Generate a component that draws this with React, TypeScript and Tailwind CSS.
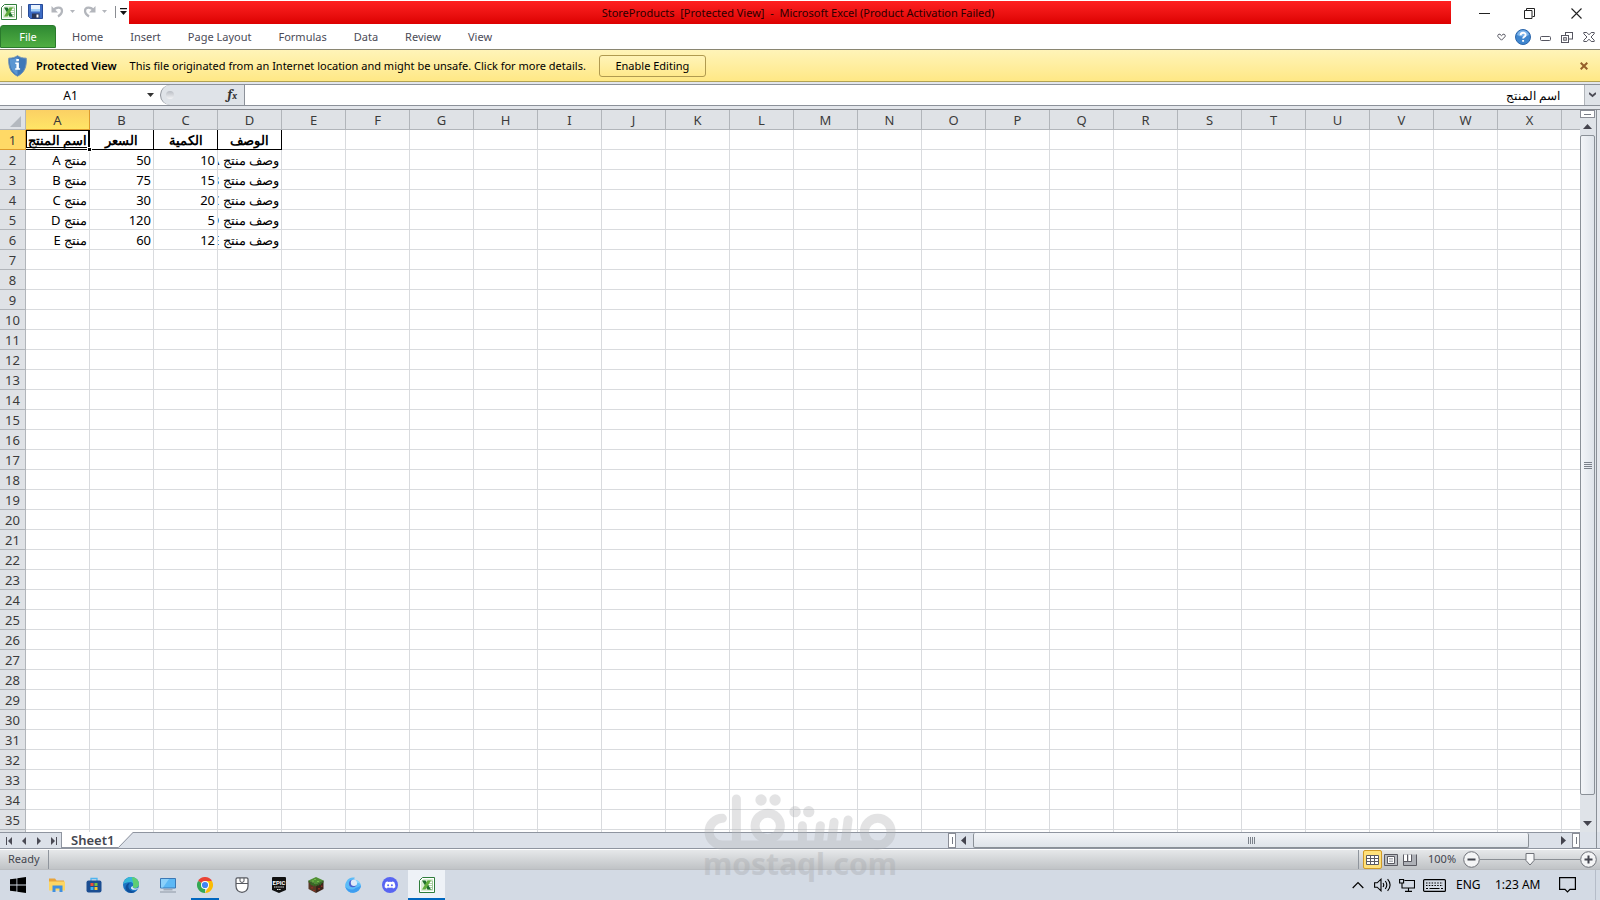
import type { ReactNode } from "react";

const tabs = ["Home", "Insert", "Page Layout", "Formulas", "Data", "Review", "View"];
const columns = "ABCDEFGHIJKLMNOPQRSTUVWX".split("");
const rowNumbers = Array.from({ length: 36 }, (_, i) => i + 1);

const sheet: string[][] = [
  ["اسم المنتج", "السعر", "الكمية", "الوصف"],
  ["منتج A", "50", "10", "وصف منتج A"],
  ["منتج B", "75", "15", "وصف منتج B"],
  ["منتج C", "30", "20", "وصف منتج C"],
  ["منتج D", "120", "5", "وصف منتج D"],
  ["منتج E", "60", "12", "وصف منتج E"],
];

function ExcelIcon() {
  return (
    <svg width="16" height="16" viewBox="0 0 16 16">
      <path d="M3.5.5h12v15H.5v-12z" fill="#fff" stroke="#2f7d3b" />
      <path d="M2 4.5 4.5 2H14v12H2z" fill="#d9edd3" />
      <path d="M8.500 4h5v8.500h-5z" fill="#fff" stroke="#8cc084" strokeWidth=".8" />
      <path d="M9 6.500h4M9 8.500h4M9 10.500h4" stroke="#8cc084" strokeWidth=".7" />
      <path d="M3 3.500h3.500L12 12.500H8.500z" fill="#1e6f2c" />
      <path d="M8.500 3.500H12L6.500 12.500H3z" fill="#62ad3c" />
    </svg>
  );
}

function SaveIcon() {
  return (
    <svg width="15" height="15" viewBox="0 0 15 15">
      <path d="M.5.5h14v14h-12l-2-2z" fill="#3d6cc4" stroke="#274b99" />
      <path d="M3 1h9v6H3z" fill="#eaf3fd" />
      <path d="M3 5h9v2.500H3z" fill="#a5d0f5" />
      <path d="M4 9.500h7.500v5H4z" fill="#2b3656" />
      <path d="M8.500 10.500h2v3h-2z" fill="#fff" />
    </svg>
  );
}

function UndoIcon({ flip = false }: { flip?: boolean }) {
  return (
    <svg width="13" height="13" viewBox="0 0 13 13" className={flip ? "-scale-x-100" : ""}>
      <path d="M2 5.500C5 1.500 11 1.500 11 6c0 2.500-1.500 4-4 5.500" fill="none" stroke="#b3b6bc" strokeWidth="2.200" />
      <path d="M.5 1v6.500H7z" fill="#b3b6bc" />
    </svg>
  );
}

function DownArrow({ color = "#4b4b55" }: { color?: string }) {
  return (
    <svg width="7" height="4" viewBox="0 0 7 4">
      <path d="M0 0h7L3.500 4z" fill={color} />
    </svg>
  );
}

function TitleBar() {
  return (
    <header className="flex h-[25px] shrink-0 items-start bg-white">
      <div className="flex h-[23px] w-[129px] shrink-0 items-center pl-px">
        <ExcelIcon />
        <span className="ml-1 h-3 w-px bg-[#8a8d92]" />
        <button aria-label="Save" className="ml-[6px]"><SaveIcon /></button>
        <button aria-label="Undo" className="ml-2"><UndoIcon /></button>
        <button aria-label="Undo history" className="ml-[6px]">
          <svg width="5" height="3" viewBox="0 0 5 3"><path d="M0 0h5L2.500 3z" fill="#b3b6bc" /></svg>
        </button>
        <button aria-label="Redo" className="ml-2"><UndoIcon flip /></button>
        <button aria-label="Redo history" className="ml-[6px]">
          <svg width="5" height="3" viewBox="0 0 5 3"><path d="M0 0h5L2.500 3z" fill="#b3b6bc" /></svg>
        </button>
        <span className="ml-2 h-3 w-px bg-[#8a8d92]" />
        <button aria-label="Customize toolbar" className="ml-1">
          <svg width="7" height="7" viewBox="0 0 7 7"><path d="M0 0h7v1.300H0zM0 3h7L3.500 7z" fill="#111" /></svg>
        </button>
      </div>
      <div className="mt-px h-[23px] flex-1 bg-linear-to-b from-[#ff2020] to-[#dc0000] pl-4 text-center text-[11px] leading-[23px] whitespace-pre text-[#2c0000]">
        {"StoreProducts  [Protected View]  -  Microsoft Excel (Product Activation Failed)"}
      </div>
      <div className="ml-[11px] flex h-[27px] shrink-0 items-center">
        <button aria-label="Minimize" className="flex w-[45px] justify-center">
          <svg width="11" height="11" viewBox="0 0 11 11"><path d="M0 5.500h11" stroke="#222" /></svg>
        </button>
        <button aria-label="Restore" className="flex w-[45px] justify-center">
          <svg width="11" height="11" viewBox="0 0 11 11" fill="none" stroke="#222"><path d="M.5 2.500h7.500v8H.5zM2.500 2.500v-2h8v8h-2" /></svg>
        </button>
        <button aria-label="Close" className="flex w-12 justify-center">
          <svg width="11" height="11" viewBox="0 0 11 11" stroke="#222" strokeWidth="1.100"><path d="M.5.5l10 10M10.500.5l-10 10" /></svg>
        </button>
      </div>
    </header>
  );
}

function Ribbon() {
  return (
    <nav className="flex h-6 shrink-0 items-center bg-white text-[11px] text-[#4b4b57]">
      <button className="h-[23px] w-14 self-start rounded-t-[3px] border border-[#2a7a2c] bg-linear-to-b from-[#2f8a33] to-[#4fae42] pt-px text-white">File</button>
      <div className="ml-4 flex gap-[27px]">
        {tabs.map((t) => (
          <button key={t}>{t}</button>
        ))}
      </div>
      <div className="ml-auto flex items-center pr-[5px]">
        <button aria-label="Expand ribbon">
          <svg width="9" height="8" viewBox="0 0 9 8"><path d="M4.500 7.200 1 3.700C.2 2.300 1.600.5 3 1.300l1.500 1.400L6 1.300c1.400-.8 2.800 1 2 2.400z" fill="#fff" stroke="#555560" /></svg>
        </button>
        <button aria-label="Help" className="ml-[9px]">
          <svg width="16" height="16" viewBox="0 0 16 16">
            <circle cx="8" cy="8" r="7.500" fill="#3f86cf" stroke="#2c66ab" />
            <path d="M2 6a6.200 6.200 0 0 1 12 0q-6 3-12 0" fill="#7db4ea" />
            <path d="M5.600 6.200c0-3.200 5-3.200 5-.3 0 1.900-2.500 1.900-2.500 3.700M8.100 11v1.700" fill="none" stroke="#fff" strokeWidth="1.900" />
          </svg>
        </button>
        <button aria-label="Minimize workbook" className="ml-[9px]">
          <svg width="11" height="11" viewBox="0 0 11 11"><rect x=".5" y="4.500" width="10" height="4" rx="1" fill="#fff" stroke="#555560" /></svg>
        </button>
        <button aria-label="Restore workbook" className="ml-[10px]">
          <svg width="12" height="11" viewBox="0 0 12 11" fill="#fff" stroke="#555560"><rect x="4.500" y=".5" width="7" height="6.500" /><rect x=".5" y="3.500" width="7" height="7" /><rect x="2.700" y="5.700" width="2.600" height="2.500" /></svg>
        </button>
        <button aria-label="Close workbook" className="ml-[10px]">
          <svg width="12" height="10" viewBox="0 0 12 10" fill="#fff" stroke="#555560"><path d="M.8.5h3L6 2.800 8.200.5h3v1.300L8 5l3.200 3.200v1.300h-3L6 7.200 3.800 9.500h-3V8.200L4 5 .8 1.800z" /></svg>
        </button>
      </div>
    </nav>
  );
}

function ProtectedViewBar() {
  return (
    <section className="flex h-[33px] shrink-0 items-center border-y border-[#b3a352] border-t-[#8a8672] bg-linear-to-b from-[#fff4b8] to-[#ffe885] pt-px pl-2 text-[11px] text-black">
      <svg width="19" height="22" viewBox="0 0 19 22">
        <path d="M9.500.7C12 2.500 15 3.300 18.200 3.200c.6 8-1.500 14.500-8.700 18C2.300 17.700.2 11.200.8 3.200 4 3.300 7 2.500 9.500.7z" fill="#3f78b8" stroke="#6d8fb5" />
        <path d="M9.500 2v18C4 17 1.700 12 1.900 4.300 5 4.300 7.500 3.500 9.500 2z" fill="#5c96d2" />
        <path d="M8.300 4h2.600v2.200H8.300zM7.300 7.500h3.600v5.700h1.200v1.500H7.200v-1.500h1.200V9H7.300z" fill="#fff" />
      </svg>
      <strong className="ml-[9px] pt-px font-semibold">Protected View</strong>
      <span className="ml-[13px] pt-px">This file originated from an Internet location and might be unsafe. Click for more details.</span>
      <button className="ml-[13px] h-[22px] w-[107px] rounded-[3px] border border-[#b09a50] bg-linear-to-b from-[#fff4b8] to-[#ffe98c]">Enable Editing</button>
      <button aria-label="Close message" className="mr-3 ml-auto">
        <svg width="8" height="8" viewBox="0 0 8 8" stroke="#96602a" strokeWidth="2"><path d="M.7.7l6.600 6.600M7.300.7.7 7.300" /></svg>
      </button>
    </section>
  );
}

function FormulaBar() {
  return (
    <div className="shrink-0 bg-[#e3e6eb] pt-[2px] pb-[3px]">
      <div className="flex h-[22px] border-y border-[#8c9199] bg-white">
        <input aria-label="Name box" readOnly value="A1" className="w-[141px] shrink-0 pt-px text-center text-[12px] outline-none" />
        <button aria-label="Name list" className="flex w-[19px] shrink-0 items-center justify-center"><DownArrow color="#333" /></button>
        <div className="flex w-[85px] shrink-0 items-center rounded-l-full border-r border-l border-[#8c9199] bg-[#dfe3e8] pl-[5px]">
          <span className="h-2 w-2 rounded-full bg-linear-to-b from-[#b9bdc4] to-[#f3f4f6]" />
          <button aria-label="Insert function" className="mr-[7px] ml-auto pb-px font-serif text-[14px] leading-none font-bold text-[#333] italic">f<span className="text-[10px]">x</span></button>
        </div>
        <input aria-label="Formula" dir="rtl" readOnly value="اسم المنتج" className="min-w-0 flex-1 pt-px pr-6 text-[12px] text-black outline-none" />
        <button aria-label="Expand formula bar" className="flex w-4 shrink-0 items-center justify-center border-l border-[#b1b5ba] bg-[#dfe3e8]">
          <svg width="7" height="6" viewBox="0 0 7 6"><path d="M0 1l3.500 3L7 1" fill="none" stroke="#4b4b55" strokeWidth="1.800" /></svg>
        </button>
      </div>
    </div>
  );
}

function Cell({ row, col }: { row: number; col: number }) {
  const text = sheet[row - 1]?.[col];
  if (text === undefined) return <td className="h-5 border-r border-b border-[#d9dbde] p-0" />;
  if (row === 1) {
    return (
      <td className="relative h-5 border-r border-b border-black p-0">
        <div dir="rtl" className="overflow-hidden pt-px text-center leading-[18px] font-bold whitespace-nowrap">{text}</div>
        {col === 0 && (
          <>
            <span className="absolute inset-x-0 top-0 bottom-px border border-black" />
            <span className="absolute -right-[3px] -bottom-[3px] z-10 h-[5px] w-[5px] border border-white bg-black" />
          </>
        )}
      </td>
    );
  }
  return (
    <td className={col === 3 ? "h-5 border-r border-b border-[#d9dbde] p-0" : "h-5 border-r border-b border-[#d9dbde] p-0 pr-[2px]"}>
      <div
        dir={col === 0 || col === 3 ? "rtl" : "ltr"}
        className={col === 3 ? "w-full overflow-hidden pt-[2px] pr-[2px] text-right leading-[17px] whitespace-nowrap" : "w-full overflow-hidden pt-[2px] text-right leading-[17px] whitespace-nowrap"}
      >
        {text}
      </div>
    </td>
  );
}

function Grid() {
  return (
    <div className="min-w-0 flex-1 overflow-hidden bg-white">
      <table className="w-full table-fixed border-separate border-spacing-0 text-[13px] text-black">
        <colgroup>
          <col className="w-[26px]" />
          {columns.map((c) => (
            <col key={c} className="w-16" />
          ))}
          <col />
        </colgroup>
        <thead>
          <tr>
            <th aria-label="Select all" className="h-5 border-r border-b border-[#b1b5ba] bg-[#dfe2e6] p-0">
              <svg width="11" height="11" viewBox="0 0 11 11" className="mt-[3px] ml-auto mr-1"><path d="M11 0v11H0z" fill="#b4b9bf" /></svg>
            </th>
            {columns.map((c, i) => (
              <th
                key={c}
                className={
                  i === 0
                    ? "h-5 border-r border-b border-[#dc9a2c] bg-linear-to-b from-[#fbd064] to-[#ffe566] p-0 pt-[2px] leading-[17px] font-normal text-[#3b3b3b]"
                    : "h-5 border-r border-b border-[#b1b5ba] bg-[#dfe2e6] p-0 pt-[2px] leading-[17px] font-normal text-[#3b3b3b]"
                }
              >
                {c}
              </th>
            ))}
            <th aria-label="Y" className="h-5 border-b border-[#b1b5ba] bg-[#dfe2e6] p-0" />
          </tr>
        </thead>
        <tbody>
          {rowNumbers.map((r) => (
            <tr key={r}>
              <th
                className={
                  r === 1
                    ? "h-5 border-r border-b border-[#dc9a2c] bg-[#ffd966] p-0 pt-[2px] leading-[17px] font-normal text-[#3b3b3b]"
                    : "h-5 border-r border-b border-[#b1b5ba] bg-[#dfe2e6] p-0 pt-[2px] leading-[17px] font-normal text-[#3b3b3b]"
                }
              >
                {r}
              </th>
              {columns.map((c, i) => (
                <Cell key={c} row={r} col={i} />
              ))}
              <td className="h-5 border-b border-[#d9dbde] p-0" />
            </tr>
          ))}
        </tbody>
      </table>
    </div>
  );
}

function VerticalScroll() {
  return (
    <div className="flex w-5 shrink-0 bg-[#e4e7ec]">
      <div className="flex w-[17px] flex-col border-r border-[#8a9097] bg-[#dfe3e8]">
        <div className="flex h-2 w-[15px] shrink-0 items-center justify-center border border-[#8a8d96] bg-white">
          <span className="h-px w-[7px] bg-[#777b85]" />
        </div>
        <button aria-label="Scroll up" className="flex h-[17px] w-[15px] shrink-0 items-center justify-center">
          <svg width="9" height="5" viewBox="0 0 9 5"><path d="M4.500 0 9 5H0z" fill="#44444e" /></svg>
        </button>
        <div className="flex w-[15px] flex-1 flex-col items-center justify-center gap-px rounded-[2px] border border-[#8a9097] bg-linear-to-r from-[#f3f5f8] to-[#dfe4ea]">
          {[0, 1, 2, 3].map((i) => (
            <span key={i} className="h-px w-2 bg-[#7b818a]" />
          ))}
        </div>
        <div className="h-[19px] shrink-0" />
        <button aria-label="Scroll down" className="flex h-[18px] w-[15px] shrink-0 items-center justify-center">
          <svg width="9" height="5" viewBox="0 0 9 5"><path d="M0 0h9L4.500 5z" fill="#44444e" /></svg>
        </button>
      </div>
    </div>
  );
}

function SplitHandle() {
  return (
    <span className="flex w-2 shrink-0 items-center justify-center border border-[#8a8d96] bg-white">
      <span className="h-[7px] w-px bg-[#777b85]" />
    </span>
  );
}

const navIcons: [string, string][] = [
  ["First sheet", "M1 0h1v8H1zM7 0v8L3 4z"],
  ["Previous sheet", "M6 0v8L2 4z"],
  ["Next sheet", "M2 0v8l4-4z"],
  ["Last sheet", "M1 0v8l4-4zM6 0h1v8H6z"],
];

function SheetBar() {
  return (
    <div className="flex h-[17px] shrink-0 border-b border-[#8f95a0] bg-[#dce1e9]">
      <div className="flex min-w-0 flex-1 border-t border-[#8f95a0]">
        <div className="flex w-[62px] shrink-0 items-center gap-[6px] border-r border-[#8f95a0] pl-[5px]">
          {navIcons.map(([label, d]) => (
            <button key={label} aria-label={label}>
              <svg width="9" height="8" viewBox="0 0 9 8"><path d={d} fill="#4b4b55" /></svg>
            </button>
          ))}
        </div>
        <div className="relative -mt-px flex h-4 w-[71px] shrink-0">
          <svg className="absolute inset-0" width="71" height="16" viewBox="0 0 71 16">
            <path d="M0 0h71L56 15.500H0z" fill="#fff" />
            <path d="M71 .5 56.500 15.500H0" fill="none" stroke="#8f95a0" />
          </svg>
          <button className="relative pl-[9px] text-[13px] leading-4 font-semibold text-[#44464f]">Sheet1</button>
        </div>
        <div className="flex-1" />
        <SplitHandle />
        <button aria-label="Scroll left" className="flex w-3 shrink-0 items-center justify-end">
          <svg width="5" height="9" viewBox="0 0 5 9" className="mr-[2px]"><path d="M5 0v9L0 4.500z" fill="#44444e" /></svg>
        </button>
        <div className="ml-[5px] flex w-[calc(35%+3px)] shrink-0 items-center justify-center gap-px rounded-[2px] border border-t-0 border-[#8a9097] bg-linear-to-b from-[#f3f5f8] to-[#dfe4ea]">
          {[0, 1, 2, 3].map((i) => (
            <span key={i} className="h-[7px] w-px bg-[#7b818a]" />
          ))}
        </div>
        <button aria-label="Scroll right" className="flex w-[37px] shrink-0 items-center justify-end">
          <svg width="5" height="9" viewBox="0 0 5 9"><path d="M0 0v9l5-4.500z" fill="#44444e" /></svg>
        </button>
        <span className="w-[6px] shrink-0" />
        <SplitHandle />
      </div>
      <div className="w-5 shrink-0">
        <div className="h-full w-[17px] border-r border-[#8a9097]" />
      </div>
    </div>
  );
}

function StatusBar() {
  return (
    <div className="flex h-[21px] shrink-0 items-center border-t border-b border-t-white border-b-[#b9bcc0] bg-linear-to-b from-[#e6e8ea] to-[#c0c3c6] text-[11px] text-[#44464f]">
      <span className="w-12 shrink-0 pl-2">Ready</span>
      <span className="h-full w-px bg-[#8f959d]" />
      <span className="ml-auto h-full w-px bg-[#8f959d]" />
      <button aria-label="Normal view" className="ml-1 flex h-[19px] w-[19px] items-center justify-center rounded-[2px] border border-[#d09a28] bg-[#ffe17a]">
        <svg width="13" height="10" viewBox="0 0 13 10" fill="#fff" stroke="#5a5a62"><path d="M.5.5h12v9H.5zM.5 3.500h12M.5 6.500h12M4.500.5v9M8.500.5v9" /></svg>
      </button>
      <button aria-label="Page layout view" className="ml-[2px]">
        <svg width="14" height="12" viewBox="0 0 14 12"><path d="M.5.5h13v11H.5z" fill="#b9bcc1" stroke="#5a5a62" /><path d="M3.500 2.500h7v7h-7z" fill="#fff" stroke="#5a5a62" /><path d="M5 4.500h4M5 6h4M5 7.500h4" stroke="#8a8d96" strokeWidth=".7" /></svg>
      </button>
      <button aria-label="Page break preview" className="ml-[5px]">
        <svg width="14" height="12" viewBox="0 0 14 12"><path d="M.5.5h13v11H.5z" fill="#aeb1b7" /><path d="M1 1h3v6H1zM5.500 1h3v6h-3z" fill="#fff" /><path d="M.5.5v11h13V.5M4.500.5v7M8.500.5v7H.5" fill="none" stroke="#5a5a62" /></svg>
      </button>
      <span className="ml-[11px] w-7">100%</span>
      <button aria-label="Zoom out" className="ml-[7px]">
        <svg width="17" height="17" viewBox="0 0 17 17"><circle cx="8.500" cy="8.500" r="7.800" fill="#f4f5f6" stroke="#6f7279" /><path d="M4.500 8.500h8" stroke="#44464f" strokeWidth="2" /></svg>
      </button>
      <div className="relative h-[17px] w-[100px]">
        <svg width="100" height="17" viewBox="0 0 100 17">
          <path d="M0 8.500h100" stroke="#8b8f95" />
          <path d="M46 2.500h8v7l-4 4.500-4-4.500z" fill="#f7f8f9" stroke="#6f7279" />
        </svg>
        <input type="range" aria-label="Zoom" min={10} max={190} defaultValue={100} className="absolute inset-0 w-full opacity-0" />
      </div>
      <button aria-label="Zoom in" className="mr-[3px]">
        <svg width="17" height="17" viewBox="0 0 17 17"><circle cx="8.500" cy="8.500" r="7.800" fill="#f4f5f6" stroke="#6f7279" /><path d="M4.500 8.500h8M8.500 4.500v8" stroke="#44464f" strokeWidth="2" /></svg>
      </button>
    </div>
  );
}

const apps: { name: string; open?: boolean; active?: boolean; icon: ReactNode }[] = [
  {
    name: "File Explorer",
    icon: (
      <svg width="16" height="16" viewBox="0 0 16 16">
        <path d="M0 1.500h6l1.500 2H15v3H0z" fill="#e8a33a" />
        <path d="M0 4.500h16v9H0z" fill="#fdd663" />
        <path d="M3.500 8.500h10V15h-3v-3.500h-4V15h-3z" fill="#3f8fe0" />
      </svg>
    ),
  },
  {
    name: "Microsoft Store",
    icon: (
      <svg width="16" height="16" viewBox="0 0 16 16">
        <path d="M5 4V1.500h6V4" fill="none" stroke="#4db4f0" strokeWidth="1.300" />
        <rect x=".5" y="3.500" width="15" height="12" rx="2" fill="#1b4d91" />
        <path d="M4.500 6H7.500v3h-3z" fill="#f04e37" /><path d="M8.500 6h3v3h-3z" fill="#7ac143" />
        <path d="M4.500 10h3v3h-3z" fill="#3fb4f0" /><path d="M8.500 10h3v3h-3z" fill="#fdc82f" />
      </svg>
    ),
  },
  {
    name: "Edge",
    icon: (
      <svg width="16" height="16" viewBox="0 0 16 16">
        <circle cx="8" cy="8" r="8" fill="#1b74c4" />
        <path d="M.3 7C1 2.500 4.500 0 8 0c4.500 0 8 3.200 8 7 0 2.500-2 4-4 4-1.800 0-2.800-.8-2-2 1-2-.5-4-3-4S1.500 6 .3 7z" fill="#35b8d8" />
        <path d="M9 0c4 .3 7 3.300 7 7 0 2.500-2 4-4 4-1.800 0-2.800-.8-2-2C11 6 9 3 9 0z" fill="#5fce73" />
        <path d="M5.500 8.500c-.8 3.500 3 6.500 7.500 5.500C9.500 17.500 3 16 2.500 11 2.500 8 4.500 6 6.500 6c0 1-.8 1.500-1 2.500z" fill="#0e4f9a" />
        <path d="M10 9c-1 1.200.2 2.500 2 2.500 1.500 0 3-.5 3.700-1.500-1 3-5 3.600-7.200 2C7.500 11 8 9.500 10 9z" fill="#e8eef6" />
      </svg>
    ),
  },
  {
    name: "This PC",
    icon: (
      <svg width="16" height="16" viewBox="0 0 16 16">
        <path d="M.5 1.500h15v9.500H.5z" fill="#5cb8f5" stroke="#3b78b5" />
        <path d="M1 2h8L3 10.500H1z" fill="#8bd0fa" />
        <path d="M3.500 12.800h9M0 15h16" stroke="#8e98a5" strokeWidth="1" />
      </svg>
    ),
  },
  {
    name: "Chrome",
    open: true,
    icon: (
      <svg width="16" height="16" viewBox="0 0 16 16">
        <path d="M8 8 1.070 4A8 8 0 0 1 14.930 4z" fill="#ea4335" />
        <path d="M8 8v8A8 8 0 0 1 1.070 4z" fill="#34a853" />
        <path d="M8 4h6.930A8 8 0 0 1 8 16l3.460-6z" fill="#fbbc05" />
        <circle cx="8" cy="8" r="4" fill="#fff" /><circle cx="8" cy="8" r="3.100" fill="#4285f4" />
      </svg>
    ),
  },
  {
    name: "Mouse settings",
    icon: (
      <svg width="14" height="16" viewBox="0 0 14 16">
        <path d="M2.500.8h9a1.500 1.500 0 0 1 1.500 1.500V9c0 4-2.500 6.300-6 6.300S1 13 1 9V2.300A1.500 1.500 0 0 1 2.500.8z" fill="#fff" stroke="#55585f" strokeWidth="1.200" />
        <path d="M1 6.500h12M5 1v3.500q2 2 4 0V1" fill="none" stroke="#55585f" />
      </svg>
    ),
  },
  {
    name: "Epic Games",
    icon: (
      <svg width="14" height="16" viewBox="0 0 14 16">
        <path d="M1 0h12a1 1 0 0 1 1 1v12l-7 3-7-3V1a1 1 0 0 1 1-1z" fill="#111" />
        <text x="7" y="7.500" fill="#fff" fontSize="6" fontWeight="700" textAnchor="middle" fontFamily="Roboto">EPIC</text>
        <path d="M2 10h10M5 12.500h4" stroke="#fff" strokeWidth=".9" strokeDasharray="1.500 .6" />
      </svg>
    ),
  },
  {
    name: "Minecraft",
    icon: (
      <svg width="16" height="16" viewBox="0 0 16 16">
        <path d="M8 0 15.500 3.500 8 7.500.5 3.500z" fill="#4f8f34" />
        <path d="M.5 3.500 8 7.500V16L.5 12z" fill="#5a3826" /><path d="M15.500 3.500 8 7.500V16l7.500-4z" fill="#3c231a" />
        <path d="M.5 3.500 8 7.500v2L6 8v1.500L4 8 2.500 8V6l-2-.5zM15.500 3.500 8 7.500v2L10 8v1l2-2v1.500l2-2.500 1.500-.5z" fill="#356b25" />
        <path d="M3 10h2v1.500H3zM5 13h2v1H5zM10 11h2v1.500h-2zM13 8.500h1.500V10H13z" fill="#8a2f22" />
        <path d="M6 2h2v1H6zM9 4h2v1H9zM4 3.500h2v1H4z" fill="#76b84d" />
      </svg>
    ),
  },
  {
    name: "Browser",
    icon: (
      <svg width="16" height="16" viewBox="0 0 16 16">
        <path d="M1.500 4.500C3 1 7 0 10 .8c-1 .6-1 1.400 0 2 3 .5 5.500 3 6 5.700A8 8 0 0 1 .2 9.500C0 7.500.5 6 1.500 4.500z" fill="#5bbcf8" />
        <path d="M.2 9.500C3 13 8 13.500 10.500 11c2-.5 4-1.500 5.500-2.500A8 8 0 0 1 .2 9.500z" fill="#3d9df0" />
        <circle cx="7.800" cy="6.500" r="3.800" fill="#4a62cf" />
        <circle cx="9" cy="5.700" r="3.200" fill="#dfeaf8" />
        <path d="M10 2.800c3 .5 5 2 5.500 4.200-2-1-3-1.200-3.500-1.200A4 4 0 0 0 10 2.800z" fill="#8ed6fd" />
      </svg>
    ),
  },
  {
    name: "Discord",
    icon: (
      <svg width="16" height="16" viewBox="0 0 16 16">
        <circle cx="8" cy="8" r="8" fill="#5865f2" />
        <path d="M5.700 4.500 6.500 5q1.500-.3 3 0l.8-.5q1.200.2 2 .8 1.200 2.400 1 5-1 .9-2.300 1.200l-.7-1q-2.300.6-4.600 0l-.7 1q-1.300-.3-2.300-1.200-.2-2.600 1-5 .8-.6 2-.8z" fill="#fff" />
        <circle cx="6.100" cy="8.300" r="1" fill="#5865f2" /><circle cx="9.900" cy="8.300" r="1" fill="#5865f2" />
      </svg>
    ),
  },
  { name: "Excel", active: true, icon: <ExcelIcon /> },
];

function Taskbar() {
  return (
    <footer className="flex h-[30px] shrink-0 bg-[#d3dae4] text-[12px] text-black">
      <button aria-label="Start" className="flex w-[38px] items-center justify-center pr-[2px]">
        <svg width="16" height="16" viewBox="0 0 16 16"><path d="M0 2.300 6.500 1.400v6.200H0zM7.300 1.300 16 0v7.600H7.300zM0 8.400h6.500v6.200L0 13.700zM7.300 8.400H16V16l-8.700-1.300z" /></svg>
      </button>
      {apps.map((a) => (
        <button key={a.name} aria-label={a.name} className={a.active ? "flex w-[37px] flex-col items-center bg-[#eef2f7]" : "flex w-[37px] flex-col items-center"}>
          <span className="flex flex-1 items-center">{a.icon}</span>
          <span className={a.active ? "-mt-[2px] h-[2px] w-full bg-[#0067c0]" : a.open ? "-mt-[2px] h-[2px] w-7 bg-[#0067c0]" : "hidden"} />
        </button>
      ))}
      <div className="ml-auto flex items-center">
        <button aria-label="Show hidden icons">
          <svg width="12" height="8" viewBox="0 0 12 8"><path d="M.7 7 6 1.500 11.300 7" fill="none" stroke="#000" strokeWidth="1.200" /></svg>
        </button>
        <button aria-label="Volume" className="ml-[10px]">
          <svg width="17" height="14" viewBox="0 0 17 14" fill="none" stroke="#000" strokeWidth="1.100"><path d="M.6 4.800h2.600L7 1.200v11.600L3.200 9.200H.6zM9 5q1.500 2 0 4M11.300 3q3 4 0 8M13.600 1.200q5 5.800 0 11.600" /></svg>
        </button>
        <button aria-label="Network" className="ml-2">
          <svg width="16" height="14" viewBox="0 0 16 14" fill="none" stroke="#000" strokeWidth="1.100"><path d="M5.500 2.500h10v7.500H3V6M6 13.400h7M9.500 10v3.400M.6 1.500h4v3.500h-4zM3 5v3" /></svg>
        </button>
        <button aria-label="Touch keyboard" className="ml-2">
          <svg width="23" height="13" viewBox="0 0 23 13" fill="none" stroke="#000"><rect x=".6" y=".6" width="21.800" height="11.800" rx="1" strokeWidth="1.200" /><path d="M3 4h17M3 6.500h17" strokeWidth="1.200" strokeDasharray="1.500 1.300" /><path d="M3 9.500h2M6.500 9.500h10M18 9.500h2" strokeWidth="1.200" /></svg>
        </button>
        <span className="ml-[10px] w-[25px]">ENG</span>
        <time className="ml-[14px] w-[46px] whitespace-nowrap">1:23 AM</time>
        <button aria-label="Notifications" className="ml-[18px]">
          <svg width="17" height="16" viewBox="0 0 17 16"><path d="M.6.6h15.800v11.800H11L8.500 15 6 12.400H.6z" fill="none" stroke="#000" strokeWidth="1.200" /></svg>
        </button>
        <span className="ml-[19px] h-full w-[5px] border-l border-[#b5bcc8]" />
      </div>
    </footer>
  );
}

function Watermark() {
  return (
    <div className="pointer-events-none absolute bottom-[22px] left-1/2 flex -translate-x-1/2 flex-col items-center opacity-35">
      <svg width="192" height="56" viewBox="132 42 576 168" fill="none" stroke="#b0b2b5" strokeWidth="27" strokeLinecap="round">
        <circle cx="653" cy="155" r="40" />
        <circle cx="323" cy="138" r="38" />
        <path d="M187 115a40 40 0 0 0 0 80H653M229 57V190M427 137V190M481 137 475 190M522 127 514 190M564 120 555 190" />
        <g fill="#b0b2b5" stroke="none">
          <circle cx="303" cy="60" r="17" /><circle cx="345" cy="60" r="17" />
          <circle cx="405" cy="95" r="17" /><circle cx="446" cy="95" r="17" />
        </g>
      </svg>
      <span className="text-[30px] leading-7 font-bold text-[#a4a6aa]">mostaql.com</span>
    </div>
  );
}

export default function App() {
  return (
    <div className="relative flex h-screen flex-col overflow-hidden bg-white font-['Noto_Sans','Liberation_Sans',sans-serif]">
      <TitleBar />
      <Ribbon />
      <ProtectedViewBar />
      <FormulaBar />
      <main className="flex min-h-0 flex-1 border-t border-[#85888e]">
        <Grid />
        <VerticalScroll />
      </main>
      <SheetBar />
      <StatusBar />
      <Taskbar />
      <Watermark />
    </div>
  );
}
